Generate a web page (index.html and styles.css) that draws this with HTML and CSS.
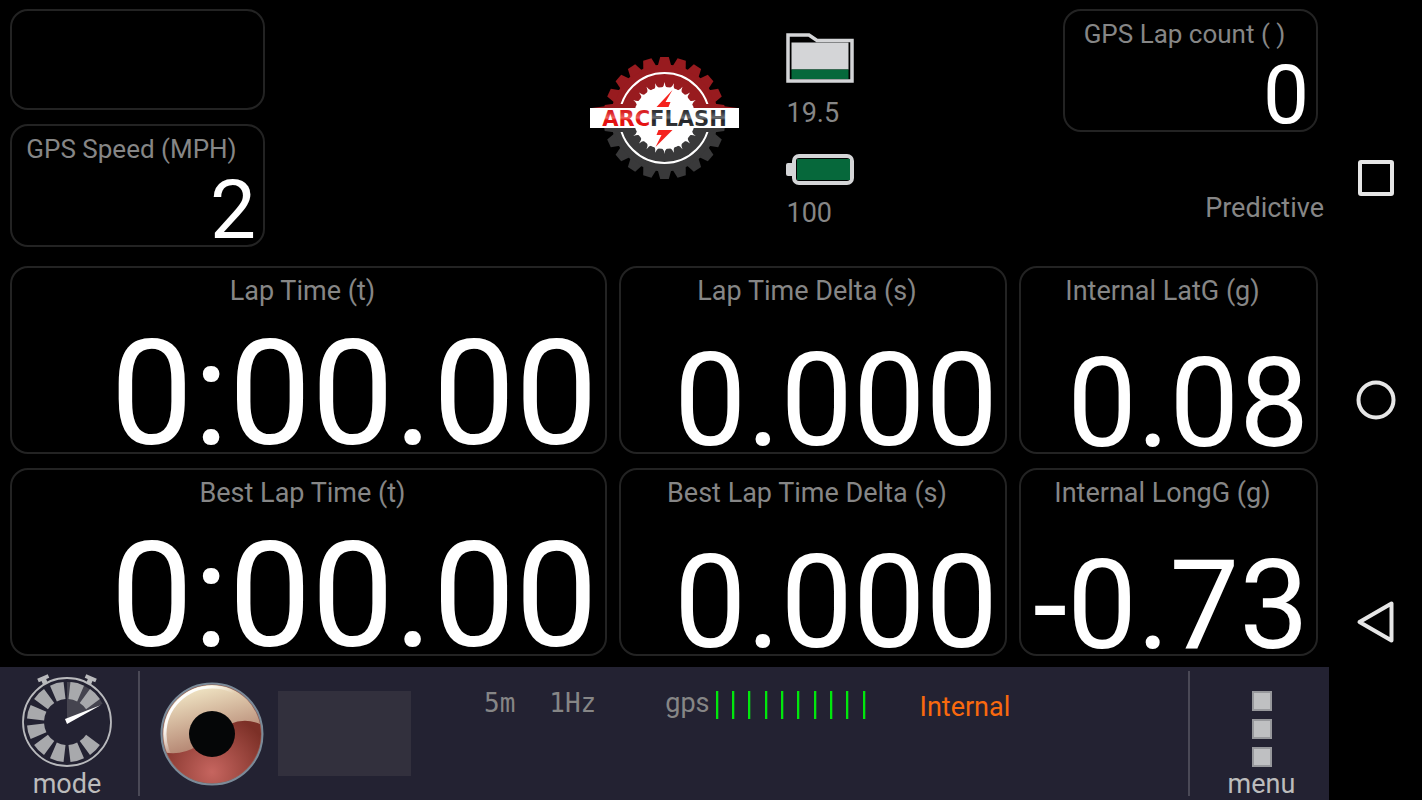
FILE: index.html
```
<!DOCTYPE html>
<html lang="en">
<head>
<meta charset="utf-8">
<title>Lap Timer Dashboard</title>
<link rel="stylesheet" href="styles.css">
</head>
<body>
<main class="app">
  <section class="top">
    <div class="top-left">
      <div class="card card-empty"></div>
      <div class="card card-small"><span class="label">GPS Speed (MPH)</span><span class="value value-s">2</span></div>
    </div>
    <svg class="logo" viewBox="0 0 150 126" role="img" aria-label="Arcflash">
      <defs>
        <path id="tooth" d="M-6.800 -52 L-4.300 -61 L4.300 -61 L6.800 -52Z"/>
        <g id="pair"><use href="#tooth"/><use href="#tooth" transform="rotate(180)"/></g>
        <g id="gear">
          <circle r="53.500"/>
          <use href="#pair"/><use href="#pair" transform="rotate(16.364)"/><use href="#pair" transform="rotate(32.727)"/><use href="#pair" transform="rotate(49.091)"/><use href="#pair" transform="rotate(65.455)"/><use href="#pair" transform="rotate(81.818)"/><use href="#pair" transform="rotate(98.182)"/><use href="#pair" transform="rotate(114.545)"/><use href="#pair" transform="rotate(130.909)"/><use href="#pair" transform="rotate(147.273)"/><use href="#pair" transform="rotate(163.636)"/>
        </g>
        <path id="spike" d="M-2.6 -30 Q-.4 -32 0 -36 Q.4 -32 2.6 -30Z"/>
        <g id="spikes3"><use href="#spike"/><use href="#spike" transform="rotate(15)"/><use href="#spike" transform="rotate(30)"/></g>
        <g id="spikes6"><use href="#spikes3"/><use href="#spikes3" transform="rotate(45)"/></g>
        <clipPath id="upper"><rect x="-75" y="-63" width="150" height="54"/></clipPath>
        <clipPath id="lower"><rect x="-75" y="10" width="150" height="54"/></clipPath>
        <clipPath id="upper-arc"><rect x="-75" y="-63" width="150" height="49"/></clipPath>
        <clipPath id="lower-arc"><rect x="-75" y="14" width="150" height="49"/></clipPath>
        <linearGradient id="redtext" x1="0" y1="0" x2="0" y2="1"><stop offset=".2" stop-color="#d81f22"/><stop offset=".45" stop-color="#f0605c"/><stop offset=".55" stop-color="#df1010"/><stop offset="1" stop-color="#f01818"/></linearGradient>
        <linearGradient id="darktext" x1="0" y1="0" x2="0" y2="1"><stop offset=".2" stop-color="#303236"/><stop offset=".45" stop-color="#6b6d70"/><stop offset=".55" stop-color="#222428"/><stop offset="1" stop-color="#404246"/></linearGradient>
      </defs>
      <g transform="translate(74.500 62)">
        <g clip-path="url(#upper)"><use href="#gear" fill="#981b1f"/><path d="M-73 -10L-42 -14H42L73 -10Z" fill="#981b1f"/></g>
        <g clip-path="url(#lower)"><use href="#gear" fill="#39393a"/><path d="M-60 10L-42 15H42L60 10Z" fill="#39393a"/></g>
        <g fill="none" stroke="#fff" stroke-width="2"><circle r="45" clip-path="url(#upper-arc)"/><circle r="45" clip-path="url(#lower-arc)"/></g>
        <g fill="#fff"><circle r="31"/><use href="#spikes6"/><use href="#spikes6" transform="rotate(90)"/><use href="#spikes6" transform="rotate(180)"/><use href="#spikes6" transform="rotate(270)"/></g>
        <path d="M8 -28L-8 -11H4L6 -16H1Z" fill="#f5231e"/>
        <path d="M-6 12H8L-9 29L-3 17H-8Z" fill="#f5231e"/>
        <rect x="-74.500" y="-10" width="149" height="20" fill="#fff"/>
        <text class="logo-text" x="0" y="8" text-anchor="middle"><tspan fill="url(#redtext)">ARC</tspan><tspan fill="url(#darktext)">FLASH</tspan></text>
      </g>
    </svg>
    <div class="top-right">
      <div class="status">
        <div class="status-item">
          <svg width="68" height="52" viewBox="0 0 68 52" aria-hidden="true"><path d="M2 48V2H23L31 7.500H66V48Z" fill="none" stroke="#d4d5d7" stroke-width="3.500"/><rect x="5.500" y="9.500" width="57" height="27" fill="#d4d5d7"/><rect x="5.500" y="36.500" width="57" height="9.500" fill="#06683b"/></svg>
          <span>19.5</span>
        </div>
        <div class="status-item">
          <svg width="68" height="31" viewBox="0 0 68 31" aria-hidden="true"><rect x="0" y="9" width="8" height="13" rx="2" fill="#d4d5d7"/><rect x="8" y="2" width="58" height="27" rx="5" fill="#030605" stroke="#d4d5d7" stroke-width="4"/><rect x="11" y="5" width="53" height="21" fill="#06683b"/></svg>
          <span>100</span>
        </div>
      </div>
      <div class="lap-side">
        <div class="card card-small"><span class="label">GPS Lap count ( )</span><span class="value value-s">0</span></div>
        <span class="predictive">Predictive</span>
      </div>
    </div>
  </section>

  <section class="gauges">
    <div class="card"><span class="label">Lap Time (t)</span><span class="value value-l">0:00.00</span></div>
    <div class="card"><span class="label">Lap Time Delta (s)</span><span class="value value-m">0.000</span></div>
    <div class="card"><span class="label">Internal LatG (g)</span><span class="value value-g">0.08</span></div>
    <div class="card"><span class="label">Best Lap Time (t)</span><span class="value value-l">0:00.00</span></div>
    <div class="card"><span class="label">Best Lap Time Delta (s)</span><span class="value value-m">0.000</span></div>
    <div class="card"><span class="label">Internal LongG (g)</span><span class="value value-g">-0.73</span></div>
  </section>

  <footer class="bar">
    <button class="bar-button mode" type="button">
      <svg width="94" height="94" viewBox="-47 -48 94 94" aria-hidden="true">
        <defs><path id="seg" d="M-7 -39.500Q0 -41 7 -39.500L4.500 -22.500Q0 -23.500 -4.500 -22.500Z"/></defs>
        <path d="M0 0V-40A40 40 0 0 1 35.600 -18.200Z" fill="#45444f"/>
        <g fill="#a8a9ac"><use href="#seg" transform="rotate(15)"/><use href="#seg" transform="rotate(45)"/><use href="#seg" transform="rotate(135)"/><use href="#seg" transform="rotate(165)"/><use href="#seg" transform="rotate(195)"/><use href="#seg" transform="rotate(225)"/><use href="#seg" transform="rotate(255)"/><use href="#seg" transform="rotate(285)"/><use href="#seg" transform="rotate(315)"/><use href="#seg" transform="rotate(345)"/></g>
        <circle r="44" fill="none" stroke="#b9babd" stroke-width="1.800"/>
        <g stroke="#b9babd"><path d="M-29 -41.500L-18.500 -46M29 -41.500L18.500 -46" stroke-width="4"/><path d="M-24 -44L-21.500 -38M24 -44L21.500 -38" stroke-width="5"/></g>
        <path d="M-2 -3L34 -17L0 2Z" fill="#fff"/>
      </svg>
      <span>mode</span>
    </button>
    <button class="record" type="button" aria-label="Record">
      <svg width="106" height="106" viewBox="-53 -53 106 106" aria-hidden="true">
        <defs>
          <linearGradient id="cream" x1=".4" y1="0" x2=".6" y2=".75"><stop offset="0" stop-color="#f1e6c5"/><stop offset="1" stop-color="#a66f5f"/></linearGradient>
          <radialGradient id="red" gradientUnits="userSpaceOnUse" cx="0" cy="38" r="60"><stop offset="0" stop-color="#c6655f"/><stop offset="1" stop-color="#7c3027"/></radialGradient>
          <linearGradient id="shine" x1=".1" y1=".1" x2=".7" y2=".7"><stop offset="0" stop-color="#fff"/><stop offset=".2" stop-color="#fff" stop-opacity=".9"/><stop offset=".5" stop-color="#fff" stop-opacity="0"/></linearGradient>
          <clipPath id="disc"><circle r="49"/></clipPath>
        </defs>
        <circle r="50.500" fill="#8e5750" stroke="#7b8b99" stroke-width="2"/>
        <circle r="49" fill="url(#cream)"/>
        <circle r="47" fill="none" stroke="url(#shine)" stroke-width="3"/>
        <path clip-path="url(#disc)" d="M-50 18Q-30 22 -15 12L18 -10Q34 -17 50 -9V51H-50Z" fill="url(#red)"/>
        <circle r="23" fill="#050607"/>
      </svg>
    </button>
    <div class="screen"></div>
    <div class="readouts">
      <span class="mono">5m</span>
      <span class="mono">1Hz</span>
      <div class="gps"><span>gps</span><span class="ticks"><i></i><i></i><i></i><i></i><i></i><i></i><i></i><i></i><i></i><i></i></span></div>
      <span class="source">Internal</span>
    </div>
    <button class="bar-button menu" type="button">
      <span class="dots"><i></i><i></i><i></i></span>
      <span>menu</span>
    </button>
  </footer>
</main>
<nav class="system" aria-label="System">
  <button type="button" aria-label="Recent apps"><svg width="40" height="40" viewBox="0 0 40 40"><rect x="4" y="4" width="32" height="32" rx="1"/></svg></button>
  <button type="button" aria-label="Home"><svg width="40" height="40" viewBox="0 0 40 40"><circle cx="20" cy="20" r="17.500"/></svg></button>
  <button type="button" aria-label="Back"><svg width="40" height="40" viewBox="0 0 40 40"><path d="M35.500 1.500V38.500L3.500 20Z"/></svg></button>
</nav>
</body>
</html>
```
FILE: styles.css
```
* { box-sizing: border-box; }
body {
  margin: 0;
  min-height: 100vh;
  display: flex;
  background: #000;
  color: #868686;
  font: 27px/32px Roboto, sans-serif;
}
button {
  margin: 0;
  padding: 0;
  border: 0;
  background: none;
  color: inherit;
  font: inherit;
  cursor: pointer;
}
svg { display: block; }
.app {
  flex: 1;
  min-width: 0;
  display: flex;
  flex-direction: column;
}
.top {
  display: grid;
  grid-template-columns: 1fr auto 1fr;
  padding: 9px 5px 0;
}
.top-left {
  width: 255px;
  margin-left: 5px;
  display: grid;
  gap: 14px;
}
.card {
  min-width: 0;
  display: flex;
  flex-direction: column;
  justify-content: space-between;
  padding: 7px 7px 4px 0;
  border: 2px solid #232323;
  border-radius: 18px;
  white-space: nowrap;
}
.card-empty { height: 101px; }
.card-small { width: 255px; height: 123px; padding-bottom: 5px; }
.label { padding-right: 5px; text-align: center; }
.card-small .label { font-size: 26px; }
.value { color: #fff; text-align: right; line-height: .72; }
.value-s { font-size: 82px; }
.value-m { font-size: 129px; }
.value-g { font-size: 124px; }
.value-l { font-size: 147px; }
.logo { width: 150px; height: 126px; margin-top: 47px; }
.logo-text { font: bold 21px "DejaVu Sans", sans-serif; }
.top-right {
  display: flex;
  justify-content: space-between;
  padding-left: 46px;
}
.status {
  display: grid;
  align-content: start;
  gap: 25px;
  padding-top: 24px;
}
.status-item { display: grid; gap: 12px; }
.status-item span { padding-left: 1px; }
.lap-side {
  display: flex;
  flex-direction: column;
  gap: 60px;
}
.lap-side .card { margin-right: 6px; }
.predictive { text-align: right; }
.gauges {
  flex: 1;
  display: grid;
  grid-template-columns: 597fr 388fr 299fr;
  grid-auto-rows: 1fr;
  gap: 14px 12px;
  padding: 19px 11px 11px 10px;
}
.bar {
  height: 133px;
  display: flex;
  background: #232232;
}
.bar-button {
  display: flex;
  flex-direction: column;
  align-items: center;
  color: #bcbcbc;
  background: linear-gradient(#4a4956, #4a4956) no-repeat;
  background-size: 2px calc(100% - 8px);
}
.mode { width: 140px; padding: 7px 6px 0 0; background-position: right 4px; }
.menu { width: 141px; padding: 24px 0 0 6px; background-position: left 4px; }
.dots { display: grid; gap: 8px; margin-bottom: 1px; }
.dots i {
  width: 20px;
  height: 20px;
  background: #bfc0c2;
  border: 2px solid #97989c;
}
.record { align-self: center; margin-left: 19px; }
.screen {
  width: 133px;
  height: 85px;
  margin: 24px 0 0 13px;
  background: #32303d;
}
.readouts {
  flex: 1;
  display: flex;
  align-items: flex-start;
  padding: 20px 0 0 73px;
}
.mono {
  margin-right: 34px;
  font-family: "DejaVu Sans Mono", monospace;
  font-size: 26px;
}
.gps { display: flex; padding-left: 35px; }
.ticks {
  width: 150px;
  display: flex;
  justify-content: space-between;
  margin: 4px 0 0 6px;
}
.ticks i { width: 3px; height: 28px; background: #00e80c; border-right: 1px solid #1b5a2a; }
.source { margin: 4px 0 0 54px; color: #f9690e; }
.system {
  width: 93px;
  display: flex;
  flex-direction: column;
  align-items: center;
  justify-content: center;
  gap: 182px;
}
.system svg { overflow: visible; fill: none; stroke: #e6e6e6; stroke-width: 4; stroke-linejoin: round; }
```
